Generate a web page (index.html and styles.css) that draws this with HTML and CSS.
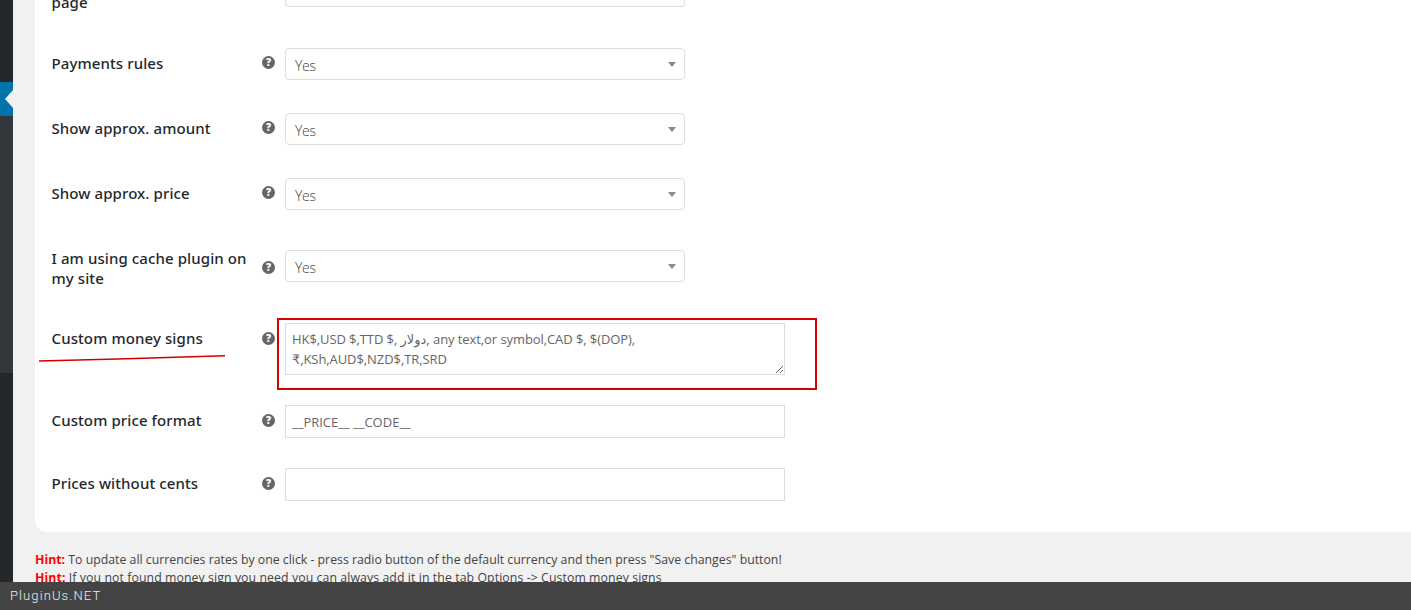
FILE: index.html
```html
<!DOCTYPE html>
<html lang="en">
<head>
<meta charset="utf-8">
<title>Currency options</title>
<link rel="stylesheet" href="styles.css">
</head>
<body>
<div class="page">
  <aside class="sidebar">
    <div class="side-top"></div>
    <div class="side-active"><span class="notch"></span></div>
    <div class="side-sub"></div>
    <div class="side-rest"></div>
  </aside>
  <main class="main">
    <section class="card">
      <div class="row row-first">
        <div class="label">page</div>
        <span class="help"></span>
        <div class="select"></div>
      </div>
      <div class="row row-a">
        <div class="label">Payments rules</div>
        <span class="help">?</span>
        <div class="select">Yes</div>
      </div>
      <div class="row row-a">
        <div class="label">Show approx. amount</div>
        <span class="help">?</span>
        <div class="select">Yes</div>
      </div>
      <div class="row row-b">
        <div class="label">Show approx. price</div>
        <span class="help">?</span>
        <div class="select">Yes</div>
      </div>
      <div class="row row-c">
        <div class="label">I am using cache plugin on my site</div>
        <span class="help">?</span>
        <div class="select">Yes</div>
      </div>
      <div class="row row-top">
        <div class="label">Custom money signs</div>
        <span class="help">?</span>
        <textarea class="field area" spellcheck="false">HK$,USD $,TTD $, دولار, any text,or symbol,CAD $, $(DOP),₹,KSh,AUD$,NZD$,TR,SRD</textarea>
      </div>
      <div class="row row-d">
        <div class="label">Custom price format</div>
        <span class="help">?</span>
        <input class="field" type="text" value="__PRICE__ __CODE__">
      </div>
      <div class="row row-d">
        <div class="label">Prices without cents</div>
        <span class="help">?</span>
        <input class="field" type="text" value="">
      </div>
      <div class="mark-box"></div>
      <svg class="mark-line" width="190" height="12" viewBox="0 0 190 12"><path d="M0 7 C60 5.6 130 3.6 186 1.8" fill="none" stroke="#d40000" stroke-width="1.6"/></svg>
    </section>
    <div class="hints">
      <p><b>Hint:</b> To update all currencies rates by one click - press radio button of the default currency and then press "Save changes" button!</p>
      <p class="hint-wide"><b>Hint:</b> If you not found money sign you need you can always add it in the tab Options -&gt; Custom money signs</p>
    </div>
  </main>
</div>
<footer class="brand">PluginUs.NET</footer>
</body>
</html>
```
FILE: styles.css
```css
* { box-sizing: border-box; }
html, body { margin: 0; height: 610px; overflow: hidden; }
body { background: #f1f1f1; font-family: "Open Sans", "DejaVu Sans", sans-serif; position: relative; }

.page { display: flex; height: 610px; }

.sidebar { width: 13px; flex: none; display: flex; flex-direction: column; background: #23282d; }
.side-top { height: 82px; background: #23282d; }
.side-active { height: 34px; background: #0073aa; display: flex; align-items: center; justify-content: flex-end; }
.notch { width: 0; height: 0; border-style: solid; border-width: 9px 8px 9px 0; border-color: transparent #f1f1f1 transparent transparent; }
.side-sub { height: 257px; background: #32373c; }
.side-rest { flex: 1; background: #23282d; }

.main { flex: 1; padding-left: 22px; min-width: 0; }

.card { position: relative; background: #fff; border-radius: 0 0 0 12px; height: 532px; padding-left: 16.5px; margin-top: 0; }

.row { display: grid; grid-template-columns: 200.5px 33px 400px; align-items: center; column-gap: 0; }
.row-first { height: 7px; margin-bottom: 41px; grid-template-rows: 7px; }
.row-first .label { height: 20px; line-height: 20px; margin-top: -4px; }
.row-first .select { height: 7px; align-self: end; border-top: 0; border-radius: 0 0 4px 4px; }
.row-a { height: 65px; padding-bottom: 33px; }
.row-b { height: 72px; padding-bottom: 40px; }
.row-c { height: 73px; padding-bottom: 41px; }
.row-c .label { margin-top: -2px; margin-bottom: -6px; }
.row-c .help { margin-top: 2px; }
.row-top { height: 82px; align-items: start; }
.row-d { height: 63px; padding-bottom: 30px; }
.row-d .label { margin-top: -3px; }

.label { font-family: "Noto Sans", "Open Sans", sans-serif; font-weight: 500; font-size: 15px; letter-spacing: 0.1px; line-height: 20px; color: #23282d; width: 200px; margin-top: -2px; }
.row-top .label { margin-top: 5px; }

.help { justify-self: start; margin-left: 10px; margin-top: -3px; width: 13px; height: 13px; border-radius: 50%; background: #666; color: #fff; font-family: "Open Sans", sans-serif; font-weight: 800; font-size: 10px; line-height: 13px; text-align: center; }
.row-first .help { background: none; }
.row-top .help { margin-top: 9px; }

.select { position: relative; height: 32px; width: 400px; border: 1px solid #ddd; border-radius: 4px; background: #fff; color: #444; font-size: 14px; font-weight: 300; letter-spacing: -0.3px; line-height: 33px; padding-left: 9px; }
.select::after { content: ""; position: absolute; right: 8px; top: 13px; width: 0; height: 0; border-style: solid; border-width: 5px 4px 0 4px; border-color: #888 transparent transparent transparent; }
.row-first .select::after { display: none; }

.field { display: block; width: 500px; height: 33px; border: 1px solid #ddd; border-radius: 0; background: #fff; color: #666; font-family: "Open Sans", "DejaVu Sans", sans-serif; font-size: 13px; padding: 0 6px; outline: none; margin: 0; }
.area { height: 52px; padding: 5px 6px; line-height: 20px; letter-spacing: -0.08px; }

.mark-box { position: absolute; left: 242px; top: 318px; width: 540px; height: 72px; border: 2px solid #d40000; pointer-events: none; }
.mark-line { position: absolute; left: 4px; top: 354px; }

.hints { padding-top: 19px; font-size: 12.3px; line-height: 18px; color: #444; }
.hints p { margin: 0; }
.hints .hint-wide { letter-spacing: 0.08px; }
.hints b { color: #f00; font-weight: 700; }

.brand { position: absolute; left: 0; right: 0; bottom: 0; height: 28px; background: #444; color: #eee; font-family: Roboto, "Open Sans", sans-serif; font-size: 13px; font-weight: 300; line-height: 27px; padding-left: 10px; letter-spacing: 1.1px; }
```
